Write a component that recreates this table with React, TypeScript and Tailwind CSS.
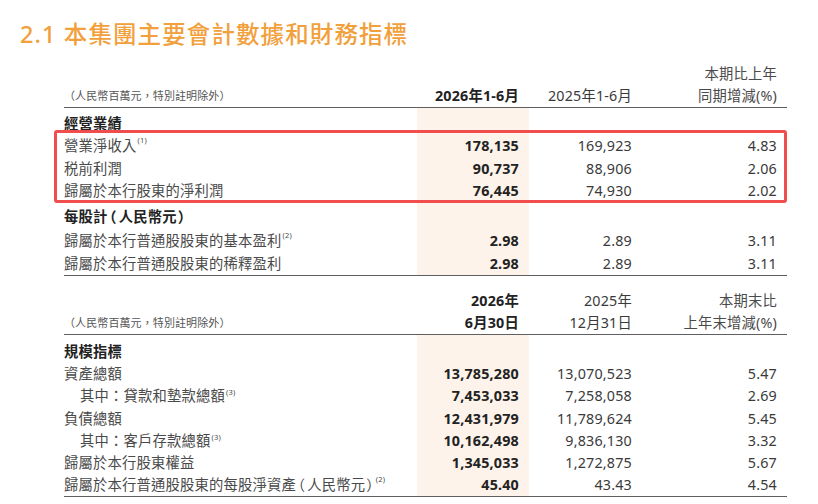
import React from "react";

const FONT = "font-['Noto_Sans','Noto_Sans_CJK_TC',sans-serif]";

function Sup({ n }: { n: number }) {
  return <sup className="text-[7.5px] ml-[1px] -top-[6px]">({n})</sup>;
}

function P({ c }: { c: string }) {
  return (
    <span
      className={`font-['Noto_Sans_CJK_TC',sans-serif] [font-feature-settings:'halt'] ${
        c === "（" ? "ml-[2px] mr-[2px]" : "ml-[1px] mr-[1px]"
      }`}
    >
      {c}
    </span>
  );
}

function Spacer({ h, hl }: { h: string; hl: boolean }) {
  return (
    <>
      <div className={h}></div>
      <div className={`${h} ${hl ? "bg-[#fdf3ea]" : ""}`}></div>
      <div className={h}></div>
      <div className={h}></div>
    </>
  );
}

function Row({
  h,
  label,
  a,
  b,
  c,
  labelCls = "text-[#4a4a4a]",
  aCls = "font-bold text-[#222]",
  bCls = "text-[#3a3a3a]",
  cCls = "text-[#3a3a3a]",
  hl = true,
  border = false,
}: {
  h: string;
  label?: React.ReactNode;
  a?: React.ReactNode;
  b?: React.ReactNode;
  c?: React.ReactNode;
  labelCls?: string;
  aCls?: string;
  bCls?: string;
  cCls?: string;
  hl?: boolean;
  border?: boolean;
}) {
  const bd = border ? "border-b-[1.5px] border-[#5f5f5f]" : "";
  return (
    <>
      <div className={`${h} ${bd} flex items-center whitespace-nowrap ${labelCls}`}>{label}</div>
      <div className={`${h} ${bd} flex items-center justify-end pr-[10px] ${hl ? "bg-[#fdf3ea]" : ""} ${aCls}`}>{a}</div>
      <div className={`${h} ${bd} flex items-center justify-end pr-[10px] ${bCls}`}>{b}</div>
      <div className={`${h} ${bd} flex items-center justify-end pr-[10px] ${cCls}`}>{c}</div>
    </>
  );
}

export default function App() {
  const H = "h-[22.5px]";
  const H2 = "h-[23.5px]";
  const HB = "h-[22.35px]";
  const head = "font-bold text-[#222]";
  const note = (
    <span className="text-[11px] text-[#555] tracking-[0.1px]">（人民幣百萬元，特別註明除外）</span>
  );
  return (
    <div className={`w-[818px] h-[504px] bg-white overflow-hidden ${FONT} text-[14.3px] tracking-[0.2px]`}>
      <div className="h-[62px] pt-[19px] pl-[20px]">
        <h1 className="text-[23.5px] leading-[30px] font-medium text-[#f2a03c] tracking-[1.1px]">
          2.1 本集團主要會計數據和財務指標
        </h1>
      </div>
      <div className="relative ml-[64px] w-[723px]">
        <div className="grid grid-cols-[353px_112px_113px_145px]">
          {/* Section 1 header */}
          <Row h="h-[23px]" hl={false} c="本期比上年" cCls="text-[#4a4a4a]" />
          <Row
            h="h-[23px]"
            hl={false}
            border
            label={note}
            a="2026年1-6月"
            b="2025年1-6月"
            c="同期增減(%)"
            aCls="font-bold text-[#222]"
            bCls="text-[#3a3a3a]"
            cCls="text-[#4a4a4a]"
          />
          <Spacer h="h-[4.25px]" hl />
          <Row h={H} label="經營業績" labelCls={head} />
          <Row h={H} label={<>營業淨收入<Sup n={1} /></>} a="178,135" b="169,923" c="4.83" />
          <Row h={H} label="税前利潤" a="90,737" b="88,906" c="2.06" />
          <Row h={H} label="歸屬於本行股東的淨利潤" a="76,445" b="74,930" c="2.02" />
          <Spacer h="h-[3px]" hl />
          <Row h={H2} label={<>每股計<P c="（" />人民幣元<P c="）" /></>} labelCls={head} />
          <Row h={H2} label={<>歸屬於本行普通股股東的基本盈利<Sup n={2} /></>} a="2.98" b="2.89" c="3.11" />
          <Row h={H2} border label="歸屬於本行普通股股東的稀釋盈利" a="2.98" b="2.89" c="3.11" />
          {/* Section 2 header */}
          <Spacer h="h-[13.5px]" hl={false} />
          <Row h="h-[22.5px]" hl={false} a="2026年" b="2025年" c="本期末比" aCls="font-bold text-[#222]" cCls="text-[#4a4a4a]" />
          <Row
            h="h-[23px]"
            hl={false}
            border
            label={note}
            a="6月30日"
            b="12月31日"
            c="上年末增減(%)"
            aCls="font-bold text-[#222]"
            cCls="text-[#4a4a4a]"
          />
          <Spacer h="h-[5.5px]" hl />
          <Row h={HB} label="規模指標" labelCls={head} />
          <Row h={HB} label="資產總額" a="13,785,280" b="13,070,523" c="5.47" />
          <Row h={HB} label={<span className="pl-[16px]">其中：貸款和墊款總額<Sup n={3} /></span>} a="7,453,033" b="7,258,058" c="2.69" />
          <Row h={HB} label="負債總額" a="12,431,979" b="11,789,624" c="5.45" />
          <Row h={HB} label={<span className="pl-[16px]">其中：客戶存款總額<Sup n={3} /></span>} a="10,162,498" b="9,836,130" c="3.32" />
          <Row h={HB} label="歸屬於本行股東權益" a="1,345,033" b="1,272,875" c="5.67" />
          <Row h={HB} border label={<>歸屬於本行普通股股東的每股淨資產<P c="（" />人民幣元<P c="）" /><Sup n={2} /></>} a="45.40" b="43.43" c="4.54" />
        </div>
        <div className="absolute left-[-10px] top-[68px] w-[733px] h-[73px] border-[3px] border-[#f04e4e] rounded-[3px] pointer-events-none"></div>
      </div>
    </div>
  );
}
